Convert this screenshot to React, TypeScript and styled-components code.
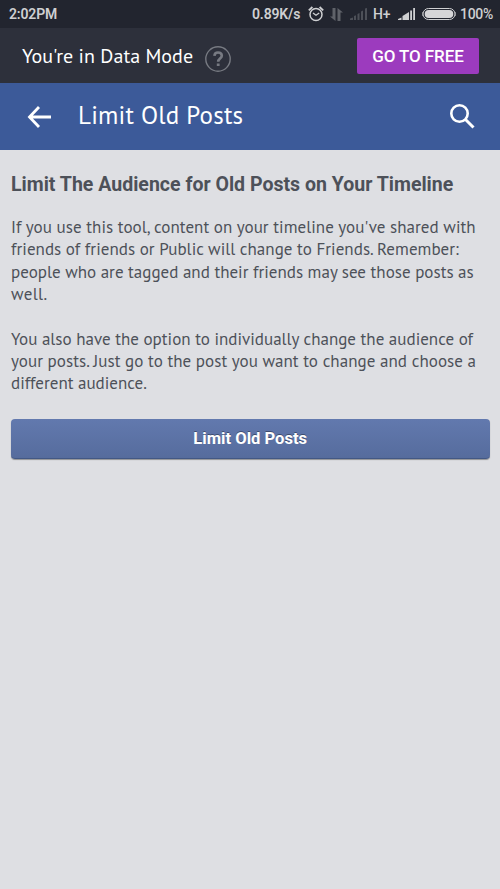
import React from 'react';
import styled, {createGlobalStyle} from "styled-components";

const GlobalStyle = createGlobalStyle`
    * {
        box-sizing: border-box;
    }

    body {
        margin: 0;
        background: #dedfe3;
    }
`;

const humanist = `"PT Sans", "Noto Sans", sans-serif`;

const StyledPage = styled.div`
    width: 500px;
    height: 889px;
    overflow: hidden;
    background: #dedfe3;
    font-family: Roboto, sans-serif;
`;

const StyledStatusBar = styled.div`
    display: flex;
    align-items: center;
    height: 28px;
    padding: 0 8px 0 9px;
    background: #22252f;
    color: #cfd0d2;
`;

const StyledStatusText = styled.span<{ $width: number; $gap?: number; $weight?: number; $spacing?: number }>`
    flex: none;
    width: ${({$width}) => $width}px;
    margin-right: ${({$gap = 0}) => $gap}px;
    font-size: 14px;
    line-height: 28px;
    font-weight: ${({$weight = 500}) => $weight};
    letter-spacing: ${({$spacing = 0}) => $spacing}px;
    white-space: nowrap;
`;

const StyledStatusIcon = styled.svg<{ $gap: number }>`
    flex: none;
    display: block;
    margin-right: ${({$gap}) => $gap}px;
`;

const StyledSpacer = styled.div`
    flex: 1;
`;

const StyledModeBar = styled.div`
    display: flex;
    align-items: center;
    height: 55px;
    padding: 0 21px 0 22px;
    background: #2d303b;
`;

const StyledModeText = styled.span`
    flex: none;
    width: 183px;
    color: white;
    font-family: ${humanist};
    font-size: 20px;
    line-height: 54px;
    letter-spacing: 0.03px;
    white-space: nowrap;
`;

const StyledHelpIcon = styled.svg`
    display: block;
    margin-top: 6px;
`;

const StyledFreeButton = styled.button`
    width: 122px;
    height: 36px;
    margin-left: auto;
    padding: 1px 0 0;
    border: none;
    border-radius: 2px;
    background: #9c3bbe;
    color: white;
    font-family: Roboto, sans-serif;
    font-size: 17px;
    font-weight: 500;
    letter-spacing: -0.1px;
    white-space: nowrap;
`;

const StyledHeader = styled.header`
    display: flex;
    align-items: center;
    height: 67px;
    padding: 0 25px 0 27px;
    background: #3c5a99;
`;

const StyledTitle = styled.h1`
    flex: 1;
    margin: 0 0 3px 26px;
    color: white;
    font-family: ${humanist};
    font-size: 25px;
    font-weight: 400;
    line-height: 40px;
    letter-spacing: 0.2px;
    white-space: nowrap;
`;

const StyledContent = styled.main`
    padding: 22px 10px 0 11px;
    color: #4d5159;
`;

const StyledHeading = styled.h2`
    margin: 0 0 19px;
    font-size: 19.55px;
    font-weight: 700;
    line-height: 25px;
    white-space: nowrap;
`;

const StyledParagraph = styled.p`
    margin: 0 0 22.5px;
    font-family: ${humanist};
    font-size: 17px;
    line-height: 22.3px;
`;

const StyledLine = styled.span<{ $spacing: number }>`
    display: block;
    letter-spacing: ${({$spacing}) => $spacing}px;
    white-space: nowrap;
`;

const StyledSubmit = styled.button`
    display: block;
    width: 478.5px;
    height: 40px;
    margin: 24px 0 0;
    padding: 0;
    border: none;
    border-bottom: 1px solid #435884;
    border-radius: 4px;
    background: linear-gradient(#6279ae, #566c9d);
    box-shadow: 0 1px 1px rgba(0, 0, 0, 0.35);
    color: white;
    font-family: Roboto, sans-serif;
    font-size: 16.6px;
    font-weight: 700;
    text-shadow: 0 -1px 0 rgba(0, 0, 0, 0.35);
`;

const audienceNote = [
    {text: "If you use this tool, content on your timeline you've shared with", spacing: 0.05},
    {text: "friends of friends or Public will change to Friends. Remember:", spacing: 0.04},
    {text: "people who are tagged and their friends may see those posts as", spacing: 0.01},
    {text: "well.", spacing: 0.4},
];

const optionNote = [
    {text: "You also have the option to individually change the audience of", spacing: 0.015},
    {text: "your posts. Just go to the post you want to change and choose a", spacing: 0.055},
    {text: "different audience.", spacing: 0},
];

const AlarmIcon = () => (
    <StyledStatusIcon $gap={6} width="16" height="16" viewBox="0 0 16 16" fill="none" stroke="#cfd0d2">
        <circle cx="8" cy="8.5" r="6" strokeWidth="1.5"/>
        <path d="M5 7 8 9.3l3.2-2.3" strokeWidth="1.3"/>
        <path d="M.8 4.4 4.4 1M15.2 4.4 11.6 1" strokeWidth="1.8"/>
    </StyledStatusIcon>
);

const DataIcon = () => (
    <StyledStatusIcon $gap={7} width="13" height="13" viewBox="0 0 13 13" fill="#5f6269">
        <path d="M2.5 0h3v13L0 8.5h2.5zM7.5 13V0L13 4.5h-2.5V13z"/>
    </StyledStatusIcon>
);

const WeakSignalIcon = () => (
    <StyledStatusIcon $gap={6} width="17" height="12" viewBox="0 0 17 12" fill="#4d5058">
        <path d="M0 12v-1.5l3-1V12zM4 12V8l2-.8V12zM7.5 12V6l2-1v7zM11 3.5l2-1V12h-2zM15 .5l2-.5v12h-2z"/>
    </StyledStatusIcon>
);

const SignalIcon = () => (
    <StyledStatusIcon $gap={7} width="17" height="12" viewBox="0 0 17 12" fill="#cfd0d2">
        <path d="M0 12v-1l3.5-1.5V12zM4.5 12V8l6.5-4v8zM12.2 2.5h1.8V12h-1.8zM15.2 0H17v12h-1.8z"/>
    </StyledStatusIcon>
);

const BatteryIcon = () => (
    <StyledStatusIcon $gap={4} width="34" height="12" viewBox="0 0 34 12">
        <rect x="1" y="0.5" width="32" height="11" rx="5.5" fill="none" stroke="#cfd0d2"/>
        <rect x="2.7" y="2" width="28.6" height="8" rx="4" fill="#d6d6d8"/>
        <path d="M0 4v4M34 4v4" stroke="#cfd0d2"/>
    </StyledStatusIcon>
);

const App = () => {
    return (
        <StyledPage>
            <GlobalStyle/>
            <StyledStatusBar>
                <StyledStatusText $width={50} $weight={600} $spacing={-0.15}>2:02PM</StyledStatusText>
                <StyledSpacer/>
                <StyledStatusText $width={48} $gap={8} $weight={600} $spacing={-0.15}>0.89K/s</StyledStatusText>
                <AlarmIcon/>
                <DataIcon/>
                <WeakSignalIcon/>
                <StyledStatusText $width={18} $gap={7} $spacing={-0.1}>H+</StyledStatusText>
                <SignalIcon/>
                <BatteryIcon/>
                <StyledStatusText $width={32} $spacing={-0.3}>100%</StyledStatusText>
            </StyledStatusBar>
            <StyledModeBar>
                <StyledModeText>You're in Data Mode</StyledModeText>
                <StyledHelpIcon width="26" height="26" viewBox="0 0 26 26" fill="none" stroke="#777a82">
                    <circle cx="13" cy="13" r="12.2" strokeWidth="1.4"/>
                    <path d="M9.4 9.8C9.6 7.5 11 6.5 13 6.5c2.3 0 3.8 1.2 3.8 3.2 0 2.8-3.6 3-3.6 6" strokeWidth="2.6"/>
                    <path d="M11.8 17.5h2.8V20h-2.8z" fill="#777a82" stroke="none"/>
                </StyledHelpIcon>
                <StyledFreeButton>GO TO FREE</StyledFreeButton>
            </StyledModeBar>
            <StyledHeader>
                <svg width="25" height="22" viewBox="0 0 25 22" fill="none" stroke="white" strokeWidth="2.8">
                    <path d="M2.5 11H24M12 1 2.5 11 12 21"/>
                </svg>
                <StyledTitle>Limit Old Posts</StyledTitle>
                <svg width="25" height="25" viewBox="0 0 25 25" fill="none" stroke="white">
                    <circle cx="9.5" cy="9.5" r="8.2" strokeWidth="2.6"/>
                    <path d="m15.5 15.5 8 8" strokeWidth="3"/>
                </svg>
            </StyledHeader>
            <StyledContent>
                <StyledHeading>Limit The Audience for Old Posts on Your Timeline</StyledHeading>
                <StyledParagraph>
                    {audienceNote.map(({text, spacing}) => (
                        <StyledLine key={text} $spacing={spacing}>{text}</StyledLine>
                    ))}
                </StyledParagraph>
                <StyledParagraph>
                    {optionNote.map(({text, spacing}) => (
                        <StyledLine key={text} $spacing={spacing}>{text}</StyledLine>
                    ))}
                </StyledParagraph>
                <StyledSubmit>Limit Old Posts</StyledSubmit>
            </StyledContent>
        </StyledPage>
    );
};

export default App;
